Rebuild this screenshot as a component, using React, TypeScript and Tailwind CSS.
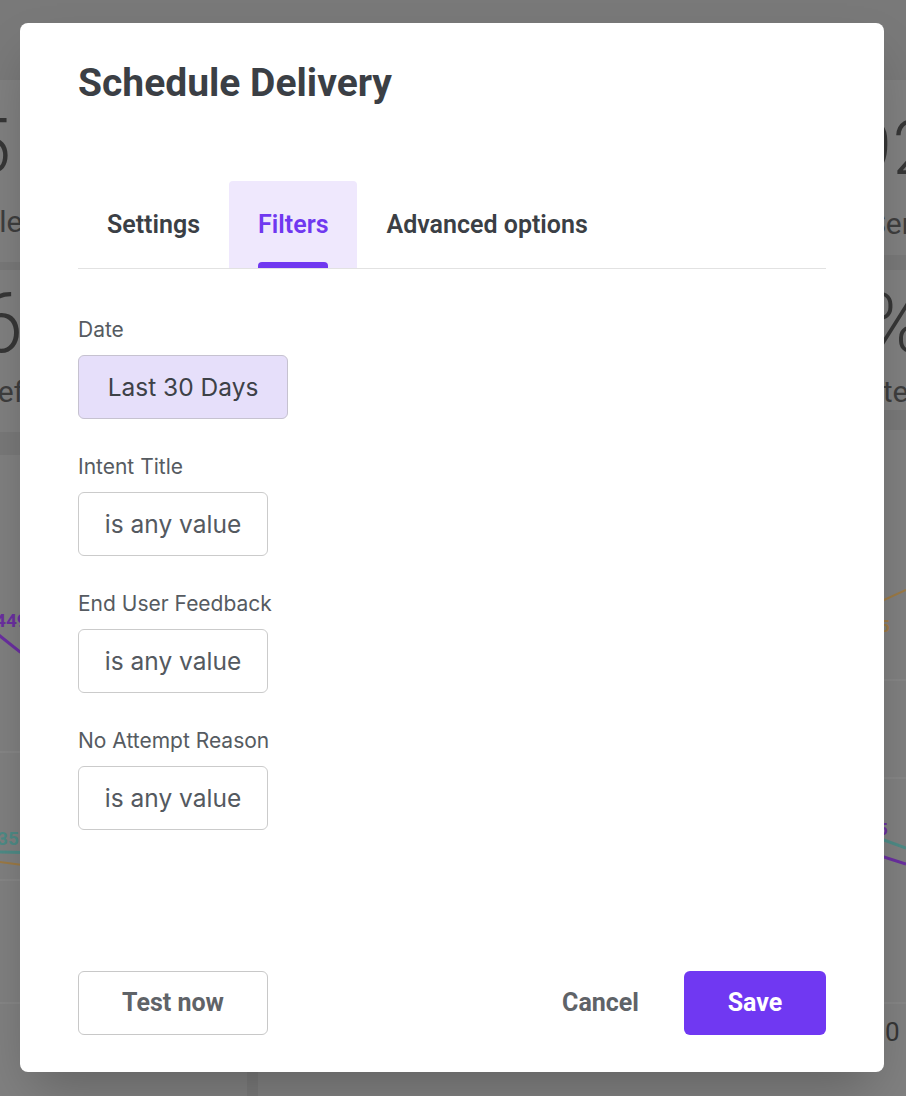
import React, { useState } from 'react';

const tabs = ['Settings', 'Filters', 'Advanced options'];

const filters = [
  { label: 'Date', value: 'Last 30 Days', selected: true },
  { label: 'Intent Title', value: 'is any value', selected: false },
  { label: 'End User Feedback', value: 'is any value', selected: false },
  { label: 'No Attempt Reason', value: 'is any value', selected: false },
];

// dimmed dashboard that sits behind the dialog
const Backdrop: React.FC = () => (
  <div className="flex gap-[11px] pt-[80px] font-['Roboto',sans-serif]">
    <div className="flex w-[247px] shrink-0 flex-col">
      <div className="flex h-[182px] flex-col bg-[#808080] pt-[28px] text-[#363636]">
        <div className="flex justify-end pr-[236px] text-[76px] font-light leading-[76px]">25</div>
        <div className="mt-[20px] ml-[-72px] text-[30px] leading-[36px] text-[#3e3e3e]">Handled</div>
      </div>
      <div className="mt-[8px] flex h-[162px] flex-col bg-[#808080] pt-[12px] text-[#363636]">
        <div className="flex justify-end pr-[224px] text-[84px] font-light leading-[84px]">16</div>
        <div className="mt-[8px] ml-[-22px] text-[30px] leading-[36px] text-[#3e3e3e]">Deflected</div>
      </div>
      <div className="mt-[23px] h-[700px] bg-[#808080]">
        <svg width="247" height="700" viewBox="0 0 247 700">
          <text x="-5" y="172" fill="#6a2fa0" fontSize="19" fontWeight="700" fontFamily="Roboto">449</text>
          <polyline points="-20,165 20,197 247,260" fill="none" stroke="#6a2fa0" strokeWidth="3" />
          <line x1="0" y1="297" x2="247" y2="297" stroke="#8c8c8c" strokeWidth="1" />
          <text x="-3" y="390" fill="#4e8b86" fontSize="19" fontWeight="700" fontFamily="Roboto">35</text>
          <polyline points="0,397 247,402" fill="none" stroke="#4e8b86" strokeWidth="3" />
          <polyline points="0,407 247,440" fill="none" stroke="#9c7a45" strokeWidth="2" />
          <line x1="0" y1="425" x2="247" y2="425" stroke="#8c8c8c" strokeWidth="1" />
          <line x1="0" y1="548" x2="247" y2="548" stroke="#8c8c8c" strokeWidth="1" />
        </svg>
      </div>
    </div>
    <div className="flex flex-1 flex-col">
      <div className="flex h-[175px] bg-[#808080] pl-[592px] pt-[30px] text-[#363636]">
        <div className="flex flex-col">
          <div className="text-[76px] font-light leading-[76px]">92</div>
          <div className="mt-[20px] ml-[18px] text-[30px] leading-[36px] text-[#3e3e3e]">Sent</div>
        </div>
      </div>
      <div className="mt-[15px] flex h-[140px] bg-[#808080] pl-[560px] pt-[12px] text-[#363636]">
        <div className="flex flex-col">
          <div className="text-[84px] font-light leading-[84px]">9%</div>
          <div className="mt-[8px] ml-[30px] text-[30px] leading-[36px] text-[#3e3e3e]">Rate</div>
        </div>
      </div>
      <div className="mt-[20px] h-[700px] bg-[#808080]">
        <svg width="648" height="700" viewBox="0 0 648 700">
          <polyline points="400,200 626,170 648,160" fill="none" stroke="#9c7a45" strokeWidth="2" />
          <text x="622" y="202" fill="#9c7a45" fontSize="17" fontWeight="700" fontFamily="Roboto">5</text>
          <line x1="0" y1="250" x2="648" y2="250" stroke="#8c8c8c" strokeWidth="1" />
          <line x1="0" y1="348" x2="648" y2="348" stroke="#8c8c8c" strokeWidth="1" />
          <text x="620" y="405" fill="#6a2fa0" fontSize="17" fontWeight="700" fontFamily="Roboto">5</text>
          <polyline points="400,400 626,410 648,418" fill="none" stroke="#4e8b86" strokeWidth="3" />
          <polyline points="400,415 626,427 648,434" fill="none" stroke="#6a2fa0" strokeWidth="3" />
          <line x1="0" y1="573" x2="648" y2="573" stroke="#8c8c8c" strokeWidth="1" />
          <text x="627" y="611" fill="#363636" fontSize="26" fontFamily="Roboto">0</text>
        </svg>
      </div>
    </div>
  </div>
);

export default function App() {
  const [active, setActive] = useState(1);

  return (
    <div className="relative h-[1096px] w-full overflow-hidden bg-[#797979]">
      <Backdrop />

      <div className="absolute left-[20px] top-[23px] flex h-[1049px] w-[864px] flex-col rounded-[8px] bg-white px-[58px] pb-[37px] pt-[36px] shadow-2xl">
        <h1 className="font-['Roboto',sans-serif] text-[39px] font-bold leading-[48px] text-[#3b3f45]">
          Schedule Delivery
        </h1>

        <div className="mt-[74px] flex h-[88px] border-b border-[#e2e2e2] font-['Roboto',sans-serif]">
          {tabs.map((tab, idx) => (
            <button
              key={tab}
              onClick={() => setActive(idx)}
              className={`relative flex items-center rounded-t-[4px] px-[29px] text-[25px] font-semibold ${
                idx === active ? 'bg-[#efe8fd] text-[#7038f0]' : 'text-[#3b3f45]'
              }`}
            >
              {tab}
              {idx === active && (
                <span className="absolute bottom-0 left-[29px] right-[29px] h-[6px] rounded-t-[4px] bg-[#7038f0]" />
              )}
            </button>
          ))}
        </div>

        <div className="mt-[49px] flex flex-col gap-[36px] font-['Inter',sans-serif]">
          {filters.map((f) => (
            <div key={f.label} className="flex flex-col items-start">
              <div className="text-[21px] leading-[24px] text-[#565b61]">{f.label}</div>
              <div
                className={`mt-[13px] flex h-[64px] items-center justify-center rounded-[6px] border text-[24.5px] text-[#3d4147] ${
                  f.selected
                    ? 'w-[210px] border-[#c6c2d0] bg-[#e6dffa]'
                    : 'w-[190px] border-[#cbcbcb] bg-white text-[#54595f]'
                }`}
              >
                {f.value}
              </div>
            </div>
          ))}
        </div>

        <div className="mt-auto flex items-center justify-between font-['Roboto',sans-serif]">
          <button className="h-[64px] w-[190px] rounded-[6px] border border-[#c8c8c8] text-[25px] font-bold text-[#5f6368]">
            Test now
          </button>
          <div className="flex items-center gap-[45px]">
            <button className="text-[25px] font-bold text-[#5f6368]">Cancel</button>
            <button className="h-[64px] w-[142px] rounded-[6px] bg-[#7038f2] text-[25px] font-bold text-white">
              Save
            </button>
          </div>
        </div>
      </div>
    </div>
  );
}
